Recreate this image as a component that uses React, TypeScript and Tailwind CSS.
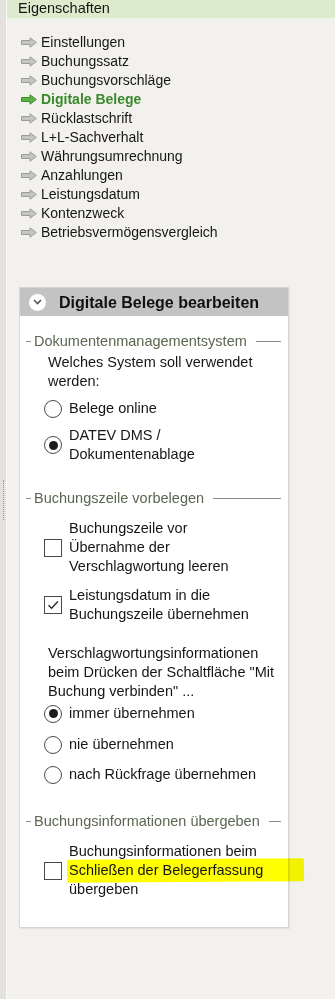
import type { ReactNode } from "react";

const navItems = [
  "Einstellungen",
  "Buchungssatz",
  "Buchungsvorschläge",
  "Digitale Belege",
  "Rücklastschrift",
  "L+L-Sachverhalt",
  "Währungsumrechnung",
  "Anzahlungen",
  "Leistungsdatum",
  "Kontenzweck",
  "Betriebsvermögensvergleich",
];

function NavArrow({ active }: { active: boolean }) {
  return (
    <svg width="16" height="11" viewBox="0 0 16 11" className="shrink-0">
      <path
        d="M0.5 3.5 H9 V0.8 L15.3 5.5 L9 10.2 V7.5 H0.5 Z"
        fill={active ? "#5fb043" : "#c4c4c4"}
        stroke={active ? "#3f8f2e" : "#9c9c9c"}
        strokeWidth="1"
        strokeLinejoin="round"
      />
    </svg>
  );
}

function Legend({ children, className = "" }: { children: ReactNode; className?: string }) {
  return (
    <div className={`flex items-center h-[19px] pl-[6px] pr-[7px] ${className}`}>
      <div className="w-[5px] h-px bg-[#8a8a8a]" />
      <span className="ml-[3px] text-[#5c6650] whitespace-nowrap">{children}</span>
      <div className="ml-[9px] flex-1 h-px bg-[#8a8a8a]" />
    </div>
  );
}

function Radio({ checked, children, className = "" }: { checked?: boolean; children: ReactNode; className?: string }) {
  return (
    <div className={`flex items-center gap-[7px] pl-[24px] ${className}`}>
      <div className="w-[18px] h-[18px] rounded-full border border-[#4a4a4a] bg-white flex items-center justify-center shrink-0">
        {checked && <div className="w-[9px] h-[9px] rounded-full bg-[#1c1c1c]" />}
      </div>
      <div>{children}</div>
    </div>
  );
}

function Check({ checked, children, className = "" }: { checked?: boolean; children: ReactNode; className?: string }) {
  return (
    <div className={`flex items-center gap-[7px] pl-[24px] ${className}`}>
      <div className="w-[18px] h-[18px] border border-[#4a4a4a] bg-white flex items-center justify-center shrink-0">
        {checked && (
          <svg width="14" height="14" viewBox="0 0 14 14">
            <path d="M2.5 7.2 L5.6 10.3 L11.8 3.6" fill="none" stroke="#2a2a2a" strokeWidth="1.4" />
          </svg>
        )}
      </div>
      <div className="relative">{children}</div>
    </div>
  );
}

export default function App() {
  return (
    <div className="flex w-[335px] h-[999px] bg-[#f2f1ed] font-['Liberation_Sans',Arial,sans-serif] text-[#161616] overflow-hidden">
      {/* splitter strip */}
      <div className="w-[7px] shrink-0 bg-[#e3e2dd] border-r border-[#f9f9f7] flex flex-col justify-center items-center">
        <div className="w-px h-[40px] border-l border-dotted border-[#9a9a94]" />
      </div>

      <div className="flex-1 flex flex-col">
        <div className="h-[20px] bg-[#dcebcb] border-b-2 border-[#eef5e6] pl-[11px] text-[14.5px] leading-[17px]">
          Eigenschaften
        </div>

        <ul className="pt-[13px] pl-[14px] text-[14px] leading-[19px]">
          {navItems.map((item) => {
            const active = item === "Digitale Belege";
            return (
              <li key={item} className="flex items-center gap-[4px] h-[19px]">
                <NavArrow active={active} />
                <span className={active ? "font-bold text-[#3a8a2c]" : ""}>{item}</span>
              </li>
            );
          })}
        </ul>

        <div className="mt-[45px] ml-[12px] w-[270px] bg-white border border-[#d6d6d4] shadow-[1px_1px_1px_rgba(0,0,0,0.06)] text-[14.5px] leading-[19px]">
          <div className="h-[28px] bg-[#c3c3c3] flex items-center pl-[9px]">
            <div className="w-[17px] h-[17px] rounded-full bg-white flex items-center justify-center">
              <svg width="9" height="6" viewBox="0 0 9 6">
                <path d="M1 1 L4.5 4.5 L8 1" fill="none" stroke="#555" strokeWidth="1.6" />
              </svg>
            </div>
            <span className="ml-[13px] font-bold text-[16px] text-[#111]">Digitale Belege bearbeiten</span>
          </div>

          <div className="pt-[16px] pb-[28px]">
            <Legend>Dokumentenmanagementsystem</Legend>
            <p className="mt-[2px] pl-[28px] pr-[10px]">Welches System soll verwendet werden:</p>
            <Radio className="mt-[8px]">Belege online</Radio>
            <Radio checked className="mt-[8px]">
              DATEV DMS /<br />Dokumentenablage
            </Radio>

            <Legend className="mt-[25px]">Buchungszeile vorbelegen</Legend>
            <Check className="mt-[11px]">
              Buchungszeile vor<br />Übernahme der<br />Verschlagwortung leeren
            </Check>
            <Check checked className="mt-[10px]">
              Leistungsdatum in die<br />Buchungszeile übernehmen
            </Check>
            <p className="mt-[20px] pl-[28px]">
              Verschlagwortungsinformationen<br />beim Drücken der Schaltfläche "Mit<br />Buchung verbinden" ...
            </p>
            <Radio checked className="mt-[3px]">immer übernehmen</Radio>
            <Radio className="mt-[12px]">nie übernehmen</Radio>
            <Radio className="mt-[11px]">nach Rückfrage übernehmen</Radio>

            <Legend className="mt-[28px]">Buchungsinformationen übergeben</Legend>
            <Check className="mt-[11px]">
              <div className="absolute left-[-2px] top-[17px] w-[237px] h-[23px] bg-[#ffff00] mix-blend-multiply -rotate-[0.4deg] rounded-[2px]" />
              <span className="relative">
                Buchungsinformationen beim<br />Schließen der Belegerfassung<br />übergeben
              </span>
            </Check>
          </div>
        </div>
      </div>
    </div>
  );
}
